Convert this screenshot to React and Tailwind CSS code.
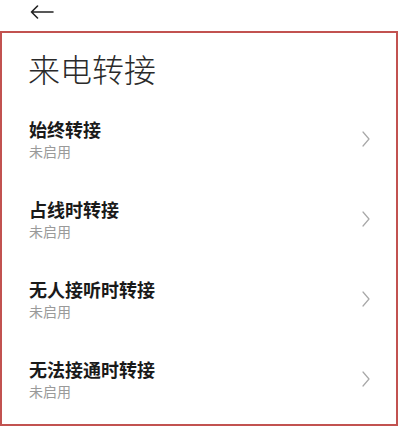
import React from "react";

const items = ["始终转接", "占线时转接", "无人接听时转接", "无法接通时转接"];

function Chevron() {
  return (
    <svg width="8" height="16" viewBox="0 0 8 16" fill="none">
      <path d="M1 1 L7 8 L1 15" stroke="#a8a8a8" strokeWidth="1.2" strokeLinecap="round" strokeLinejoin="round" />
    </svg>
  );
}

export default function App() {
  return (
    <div
      className="w-[400px] h-[434px] bg-white overflow-hidden"
      style={{ fontFamily: '"Noto Sans CJK SC", "Noto Sans", sans-serif' }}
    >
      <div className="h-[31px] flex items-start pl-[30px] pt-[5px]">
        <svg width="24" height="14" viewBox="0 0 24 14" fill="none">
          <path d="M1.5 7 H23 M7.5 1 L1.5 7 L7.5 13" stroke="#222" strokeWidth="1.6" strokeLinecap="round" strokeLinejoin="round" />
        </svg>
      </div>
      <div className="w-[398px] h-[395px] border-2 border-[#c25250] flex flex-col">
        <div className="pl-[26px] pt-[15px] h-[66px] text-[32px] leading-[40px] font-light text-[#2a2a2a]">
          来电转接
        </div>
        <div className="flex flex-col">
          {items.map((t) => (
            <div key={t} className="h-[80px] flex items-center pl-[27px] pr-[26px]">
              <div className="flex-1 flex flex-col">
                <div className="text-[18px] leading-[24px] font-bold text-[#1a1a1a]">{t}</div>
                <div className="text-[14px] leading-[20px] text-[#9a9a9a]">未启用</div>
              </div>
              <Chevron />
            </div>
          ))}
        </div>
      </div>
    </div>
  );
}
